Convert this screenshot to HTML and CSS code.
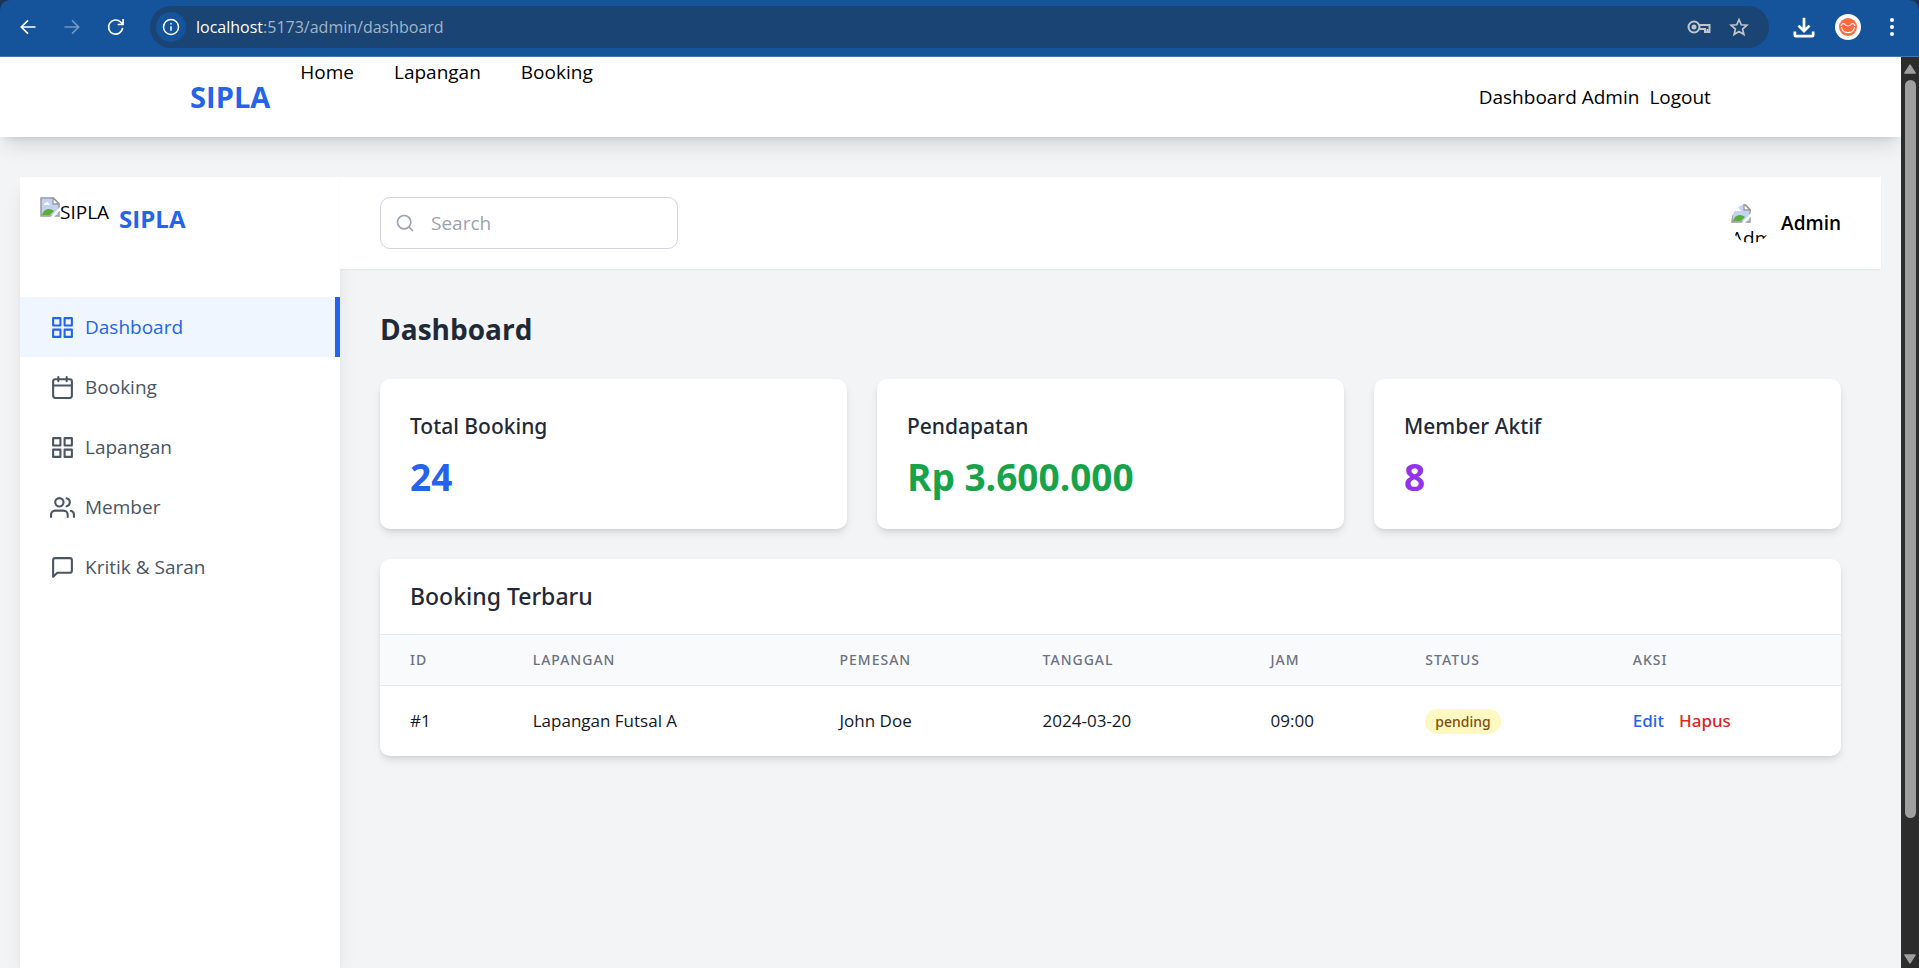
FILE: index.html
```html
<!DOCTYPE html>
<html lang="id">
<head>
<meta charset="utf-8">
<title>SIPLA - Dashboard Admin</title>
<link rel="stylesheet" href="styles.css">
</head>
<body>
<svg class="defs" aria-hidden="true">
  <symbol id="grid" viewBox="0 0 24 24"><rect x="3" y="3" width="7" height="7"/><rect x="14" y="3" width="7" height="7"/><rect x="14" y="14" width="7" height="7"/><rect x="3" y="14" width="7" height="7"/></symbol>
  <symbol id="calendar" viewBox="0 0 24 24"><rect x="3" y="4" width="18" height="18" rx="2"/><path d="M16 2v4M8 2v4M3 10h18"/></symbol>
  <symbol id="users" viewBox="0 0 24 24"><path d="M17 21v-2a4 4 0 0 0-4-4H5a4 4 0 0 0-4 4v2"/><circle cx="9" cy="7" r="4"/><path d="M23 21v-2a4 4 0 0 0-3-3.87M16 3.13a4 4 0 0 1 0 7.75"/></symbol>
  <symbol id="message" viewBox="0 0 24 24"><path d="M21 15a2 2 0 0 1-2 2H7l-4 4V5a2 2 0 0 1 2-2h14a2 2 0 0 1 2 2z"/></symbol>
  <symbol id="broken" viewBox="0 0 20 20"><path d="M1 1h12.500l5.500 5.500V19H1z" fill="#c3d3f3" stroke="#9b9b9b" stroke-width="1.500"/><path d="M13 1v6h6z" fill="#fff" stroke="#9b9b9b" stroke-width="1.300"/><path d="M4 7.500c0-1.500 1-2 2-1.500.5-1.500 2.500-1 2.500.5 1 0 1.500.5 1.500 1.500H4z" fill="#fff"/><path d="M2 18c1-4 4-6 7-6 2 0 4 1 5 2l-4 4z" fill="#5aae36"/><path d="M10.500 20 20 10v3.500L14 20z" fill="#fff"/></symbol>
</svg>

<header class="chrome">
  <button class="chrome-btn" aria-label="Back"><svg class="cicon" viewBox="0 0 24 24"><path d="M21 12H4M12 4l-8 8 8 8"/></svg></button>
  <button class="chrome-btn dim" aria-label="Forward"><svg class="cicon" viewBox="0 0 24 24"><path d="M3 12h17M12 4l8 8-8 8"/></svg></button>
  <button class="chrome-btn" aria-label="Reload"><svg class="cicon" viewBox="0 0 24 24"><path d="M20 13a8.500 8.500 0 1 1-2.500-7L20 8.500M20.500 2.500V9H14"/></svg></button>
  <div class="address">
    <button class="site-info" aria-label="Site information"><svg class="cicon" viewBox="0 0 24 24"><circle cx="12" cy="12" r="10"/><path d="M12 11v6M12 6.500v2"/></svg></button>
    <span class="url"><b>localhost</b>:5173/admin/dashboard</span>
    <button class="chrome-btn soft" aria-label="Passwords"><svg class="key" viewBox="0 0 24 14"><circle cx="7" cy="7" r="5.500"/><circle cx="7" cy="7" r="1.500" class="solid"/><path d="M12 5h10.500v7H18V9h-6"/><path d="M20.500 9v3"/></svg></button>
    <button class="chrome-btn soft" aria-label="Bookmark"><svg class="star" viewBox="0 0 24 24"><path d="m12 3 2.700 6.300 6.800.6-5.200 4.500 1.600 6.700L12 17.500l-5.900 3.600 1.600-6.700L2.500 9.900l6.800-.6z"/></svg></button>
  </div>
  <div class="chrome-tools">
    <button class="chrome-btn" aria-label="Downloads"><svg class="download" viewBox="0 0 24 24"><path d="M12 2v14M6 10.500l6 6 6-6M2 17v4q0 1 1 1h18q1 0 1-1v-4"/></svg></button>
    <button class="chrome-btn" aria-label="Profile"><svg class="profile" viewBox="0 0 26 26"><circle cx="13" cy="13" r="13" fill="#fff"/><circle cx="13" cy="13" r="9" fill="#ff6a3d"/><path d="M6 12c.5-3 3-3 4-1.500 1.500 2 4.500 2 6 0 1-1.500 3.500-1.500 4 1.500M6.500 13c.5 7.500 12.500 7.500 13 0" fill="none" stroke="#fff" stroke-width="1.200"/></svg></button>
    <button class="chrome-btn" aria-label="Menu"><svg class="dots" viewBox="0 0 4 18"><circle cx="2" cy="2" r="2"/><circle cx="2" cy="9" r="2"/><circle cx="2" cy="16" r="2"/></svg></button>
  </div>
</header>

<div class="viewport">
  <div class="page">
    <nav class="navbar">
      <a class="navbar-logo" href="#">SIPLA</a>
      <ul class="navbar-menu">
        <li><a href="#">Home</a></li>
        <li><a href="#">Lapangan</a></li>
        <li><a href="#">Booking</a></li>
      </ul>
      <div class="navbar-user"><a href="#">Dashboard Admin</a><button class="logout">Logout</button></div>
    </nav>

    <div class="layout">
      <aside class="sidebar">
        <div class="brand">
          <span class="brand-image"><svg class="broken"><use href="#broken"/></svg><span>SIPLA</span></span>
          <span class="brand-name">SIPLA</span>
        </div>
        <nav class="side-nav">
          <a class="side-link active" href="#"><svg class="icon"><use href="#grid"/></svg>Dashboard</a>
          <a class="side-link" href="#"><svg class="icon"><use href="#calendar"/></svg>Booking</a>
          <a class="side-link" href="#"><svg class="icon"><use href="#grid"/></svg>Lapangan</a>
          <a class="side-link" href="#"><svg class="icon"><use href="#users"/></svg>Member</a>
          <a class="side-link" href="#"><svg class="icon"><use href="#message"/></svg>Kritik &amp; Saran</a>
        </nav>
      </aside>

      <div class="content">
        <header class="topbar">
          <label class="search">
            <svg class="search-icon" viewBox="0 0 24 24"><circle cx="11" cy="11" r="8"/><path d="m21 21-4.350-4.350"/></svg>
            <input class="search-input" type="text" placeholder="Search" aria-label="Search">
          </label>
          <div class="account">
            <span class="avatar"><svg class="broken"><use href="#broken"/></svg><span class="avatar-alt">Admin</span></span>
            <span class="account-name">Admin</span>
          </div>
        </header>

        <main class="main">
          <h1 class="title">Dashboard</h1>
          <div class="stats">
            <section class="card stat"><h2 class="stat-label">Total Booking</h2><p class="stat-value blue">24</p></section>
            <section class="card stat"><h2 class="stat-label">Pendapatan</h2><p class="stat-value green">Rp 3.600.000</p></section>
            <section class="card stat"><h2 class="stat-label">Member Aktif</h2><p class="stat-value purple">8</p></section>
          </div>
          <section class="card">
            <h2 class="card-title">Booking Terbaru</h2>
            <table class="bookings">
              <thead>
                <tr><th class="col-id">ID</th><th class="col-court">Lapangan</th><th class="col-name">Pemesan</th><th class="col-date">Tanggal</th><th class="col-time">Jam</th><th class="col-status">Status</th><th class="col-action">Aksi</th></tr>
              </thead>
              <tbody>
                <tr><td>#1</td><td>Lapangan Futsal A</td><td>John Doe</td><td>2024-03-20</td><td>09:00</td><td><span class="badge">pending</span></td><td><div class="actions"><button class="edit">Edit</button><button class="delete">Hapus</button></div></td></tr>
              </tbody>
            </table>
          </section>
        </main>
      </div>
    </div>
  </div>
  <div class="scrollbar" aria-hidden="true">
    <svg class="arrow" viewBox="0 0 12 10"><path d="M6 1.500 10.500 8.500h-9z"/></svg>
    <div class="track"><div class="thumb"></div></div>
    <svg class="arrow" viewBox="0 0 12 10"><path d="M6 8.500 10.500 1.500h-9z"/></svg>
  </div>
</div>
</body>
</html>
```
FILE: styles.css
```css
* { box-sizing: border-box; margin: 0; padding: 0; }
body {
  display: flex;
  flex-direction: column;
  height: 100vh;
  overflow: hidden;
  background: #1c3553;
  color: #000;
  font-family: "Open Sans", "Noto Sans", sans-serif;
  font-size: 19px;
  line-height: 30px;
}
a { color: inherit; text-decoration: none; }
button { border: 0; background: none; color: inherit; font: inherit; cursor: pointer; }
svg { display: block; flex: none; }
.defs { position: absolute; width: 0; height: 0; }

/* Browser toolbar */
.chrome {
  display: flex;
  align-items: center;
  flex: none;
  height: 57px;
  padding: 0 16px 3px 18px;
  gap: 24px;
  background: #15539a;
  border-bottom: 1px solid #4577b1;
  border-radius: 10px 10px 0 0;
  color: #fff;
}
.chrome-btn { display: grid; place-items: center; }
.cicon { width: 20px; height: 20px; fill: none; stroke: currentColor; stroke-width: 2; }
.dim { color: #7398c2; }
.soft { color: #c2c6cb; }
.address {
  display: flex;
  align-items: center;
  flex: 1;
  height: 42px;
  padding: 0 20px 0 6px;
  gap: 18px;
  background: #194473;
  border-radius: 21px;
}
.site-info { display: grid; place-items: center; width: 30px; height: 30px; border-radius: 50%; background: #15539a; }
.site-info .cicon { width: 18px; height: 18px; }
.url { flex: 1; margin-left: -8px; font-size: 16px; color: #a3b4c7; }
.url b { color: #fff; font-weight: 400; }
.key { width: 24px; height: 14px; fill: none; stroke: currentColor; stroke-width: 2; }
.key .solid { fill: currentColor; }
.star { width: 20px; height: 20px; fill: none; stroke: currentColor; stroke-width: 2; }
.chrome-tools { display: flex; align-items: center; gap: 20px; }
.download { width: 22px; height: 22px; fill: none; stroke: currentColor; stroke-width: 3; }
.profile { width: 26px; height: 26px; }
.dots { width: 22px; height: 18px; fill: currentColor; }

/* Page area */
.viewport { display: flex; flex: 1; min-height: 0; }
.page {
  display: flex;
  flex-direction: column;
  flex: 1;
  min-width: 0;
  overflow: hidden;
  background: #f3f4f6;
}
.navbar {
  display: flex;
  flex: none;
  height: 80px;
  padding: 0 10%;
  background: #fff;
  box-shadow: 0 12px 19px -4px rgb(0 0 0 / .12), 0 5px 8px -5px rgb(0 0 0 / .12);
}
.navbar-logo { align-self: center; color: #2563eb; font-size: 29px; font-weight: 700; margin-right: 30px; }
.navbar-menu { display: flex; gap: 40px; list-style: none; }
.navbar-user { display: flex; align-items: center; gap: 10px; margin-left: auto; }

.layout { display: flex; flex: 1; margin: 40px 20px 0; }
.sidebar {
  position: relative;
  flex: none;
  width: 320px;
  background: #fff;
  box-shadow: 0 12px 19px -4px rgb(0 0 0 / .1), 0 5px 8px -5px rgb(0 0 0 / .1);
}
.brand { display: flex; gap: 10px; height: 80px; padding: 20px; }
.brand-image { display: flex; }
.brand-name { color: #2563eb; font-size: 24px; font-weight: 700; line-height: 43px; }
.broken { width: 20px; height: 20px; }
.side-nav { padding-top: 40px; }
.side-link {
  display: flex;
  align-items: center;
  gap: 10px;
  height: 60px;
  padding: 0 25px 0 30px;
  border-right: 5px solid transparent;
  color: #4b5563;
}
.side-link.active { background: #eff6ff; border-color: #2563eb; color: #2563eb; }
.icon { width: 25px; height: 25px; fill: none; stroke: currentColor; stroke-width: 2; stroke-linecap: round; stroke-linejoin: round; }

.content { position: relative; flex: 1; min-width: 0; }
.topbar {
  display: flex;
  align-items: center;
  justify-content: space-between;
  padding: 20px 40px;
  background: #fff;
  box-shadow: 0 1px 2px rgb(0 0 0 / .05);
}
.search {
  display: flex;
  align-items: center;
  gap: 16px;
  width: 298px;
  height: 52px;
  padding: 0 14px;
  border: 1px solid #d1d5db;
  border-radius: 10px;
}
.search-icon { width: 20px; height: 20px; fill: none; stroke: #9ca3af; stroke-width: 2; stroke-linecap: round; }
.search-input { flex: 1; min-width: 0; border: 0; outline: 0; background: none; font: inherit; }
.search-input::placeholder { color: #9ca3af; opacity: 1; }
.account { display: flex; align-items: center; gap: 10px; }
.avatar { width: 40px; height: 40px; overflow: hidden; border-radius: 50%; }
.avatar-alt { display: block; line-height: 30px; }
.account-name { font-weight: 600; }

.main { display: grid; gap: 30px; padding: 40px; }
.title { color: #1f2937; font-size: 28px; font-weight: 700; line-height: 40px; }
.stats { display: grid; grid-template-columns: repeat(3, 1fr); gap: 30px; }
.card {
  overflow: hidden;
  background: #fff;
  border-radius: 10px;
  box-shadow: 0 5px 8px -1px rgb(0 0 0 / .1), 0 2px 5px -2px rgb(0 0 0 / .1);
}
.stat { display: grid; gap: 10px; padding: 30px; }
.stat-label { color: #1f2937; font-size: 21px; font-weight: 500; line-height: 35px; }
.stat-value { font-size: 37px; font-weight: 700; line-height: 45px; }
.blue { color: #2563eb; }
.green { color: #16a34a; }
.purple { color: #9333ea; }
.card-title { padding: 20px 30px; color: #1f2937; font-size: 23px; font-weight: 500; line-height: 35px; }
.stat-label, .card-title, .bookings th, .badge, .actions { font-family: "Noto Sans", "Open Sans", sans-serif; }
.bookings { width: 100%; border-collapse: separate; border-spacing: 0; table-layout: fixed; text-align: left; }
.bookings th {
  padding: 15px 0 15px 30px;
  background: #f9fafb;
  border: solid #e5e7eb;
  border-width: 1px 0;
  color: #6b7280;
  font-size: 14px;
  font-weight: 500;
  letter-spacing: 1px;
  line-height: 20px;
  text-transform: uppercase;
}
.bookings td { padding: 20px 0 20px 30px; color: #111827; font-size: 17px; white-space: nowrap; }
.col-id { width: 8.4%; }
.col-court { width: 21%; }
.col-name { width: 13.9%; }
.col-date { width: 15.6%; }
.col-time { width: 10.6%; }
.col-status { width: 14.2%; }
.col-action { width: 16.3%; }
.badge { display: inline-block; padding: 0 10px; border-radius: 13px; background: #fef9c3; color: #854d0e; font-size: 14px; font-weight: 500; line-height: 25px; }
.actions { display: flex; gap: 15px; font-weight: 500; }
.edit { color: #2563eb; }
.delete { color: #dc2626; }

/* Scrollbar */
.scrollbar { display: flex; flex-direction: column; align-items: center; flex: none; width: 18px; padding: 6px 0 3px; background: #2c2c2c; }
.arrow { width: 14px; height: 12px; fill: #9f9f9f; stroke: #9f9f9f; stroke-width: 1; stroke-linejoin: round; }
.track { flex: 1; width: 11px; padding: 5px 0; }
.thumb { height: 85%; border-radius: 6px; background: #9f9f9f; }
```
